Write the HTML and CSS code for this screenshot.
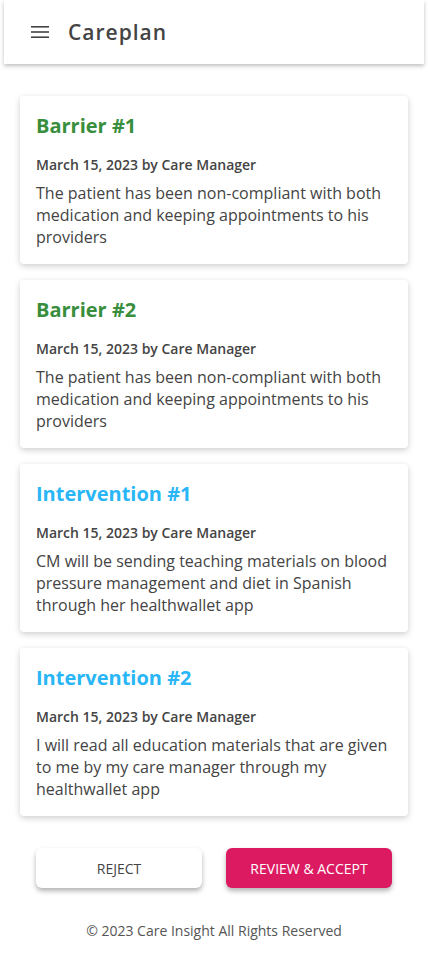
FILE: index.html
```html
<!DOCTYPE html>
<html lang="en">
<head>
<meta charset="utf-8">
<title>Careplan</title>
<link rel="stylesheet" href="styles.css">
</head>
<body>
<header class="appbar">
  <svg class="menu" width="18" height="12" viewBox="0 0 18 12"><rect y="0" width="18" height="1.6" fill="#444"/><rect y="5.2" width="18" height="1.6" fill="#444"/><rect y="10.4" width="18" height="1.6" fill="#444"/></svg>
  <h1 class="title">Careplan</h1>
</header>
<main class="content">
  <section class="card">
    <h2 class="card-title barrier">Barrier #1</h2>
    <p class="meta">March 15, 2023 by Care Manager</p>
    <p class="body">The patient has been non-compliant with both medication and keeping appointments to his providers</p>
  </section>
  <section class="card">
    <h2 class="card-title barrier">Barrier #2</h2>
    <p class="meta">March 15, 2023 by Care Manager</p>
    <p class="body">The patient has been non-compliant with both medication and keeping appointments to his providers</p>
  </section>
  <section class="card">
    <h2 class="card-title intervention">Intervention #1</h2>
    <p class="meta">March 15, 2023 by Care Manager</p>
    <p class="body">CM will be sending teaching materials on blood pressure management and diet in Spanish through her healthwallet app</p>
  </section>
  <section class="card">
    <h2 class="card-title intervention">Intervention #2</h2>
    <p class="meta">March 15, 2023 by Care Manager</p>
    <p class="body">I will read all education materials that are given to me by my care manager through my healthwallet app</p>
  </section>
  <div class="actions">
    <button class="btn btn-reject">REJECT</button>
    <button class="btn btn-accept">REVIEW &amp; ACCEPT</button>
  </div>
  <footer class="footer">© 2023 Care Insight All Rights Reserved</footer>
</main>
</body>
</html>
```
FILE: styles.css
```css
* { box-sizing: border-box; }
html, body { margin: 0; padding: 0; background: #fff; }
body { font-family: "Open Sans", "Liberation Sans", sans-serif; color: #444; }
.appbar {
  height: 64px;
  margin: 0 4px;
  background: #fff;
  display: flex;
  align-items: center;
  padding-left: 27px;
  box-shadow: 0 2px 4px rgba(0,0,0,0.25);
}
.menu { display: block; margin-right: 19px; }
.title {
  margin: 0;
  font-family: "Open Sans", sans-serif;
  font-size: 21px;
  font-weight: 600;
  letter-spacing: 1px;
  color: #444;
}
.content {
  padding: 32px 20px 0;
  display: flex;
  flex-direction: column;
  gap: 16px;
}
.card {
  background: #fff;
  border-radius: 4px;
  padding: 16px;
  box-shadow: 0 2px 6px rgba(0,0,0,0.2);
}
.card-title {
  margin: 0;
  font-size: 20px;
  line-height: 28px;
  font-weight: 700;
}
.barrier { color: #388e3c; }
.intervention { color: #29b6f6; }
.meta {
  margin: 15px 0 0;
  font-size: 14px;
  line-height: 20px;
  font-weight: 600;
  color: #444;
}
.body {
  margin: 7px 0 0;
  font-size: 16px;
  line-height: 22px;
  color: #444;
}
.actions {
  margin-top: 16px;
  padding: 0 16px;
  display: flex;
  justify-content: space-between;
}
.btn {
  width: 166px;
  height: 40px;
  border: none;
  border-radius: 6px;
  font-family: "Open Sans", sans-serif;
  font-size: 14px;
  box-shadow: 0 3px 5px rgba(0,0,0,0.3);
}
.btn-reject { background: #fff; color: #444; }
.btn-accept { background: #dc1a62; color: #fff; }
.footer {
  margin-top: 17px;
  text-align: center;
  font-size: 14px;
  line-height: 20px;
  color: #555;
}
```
